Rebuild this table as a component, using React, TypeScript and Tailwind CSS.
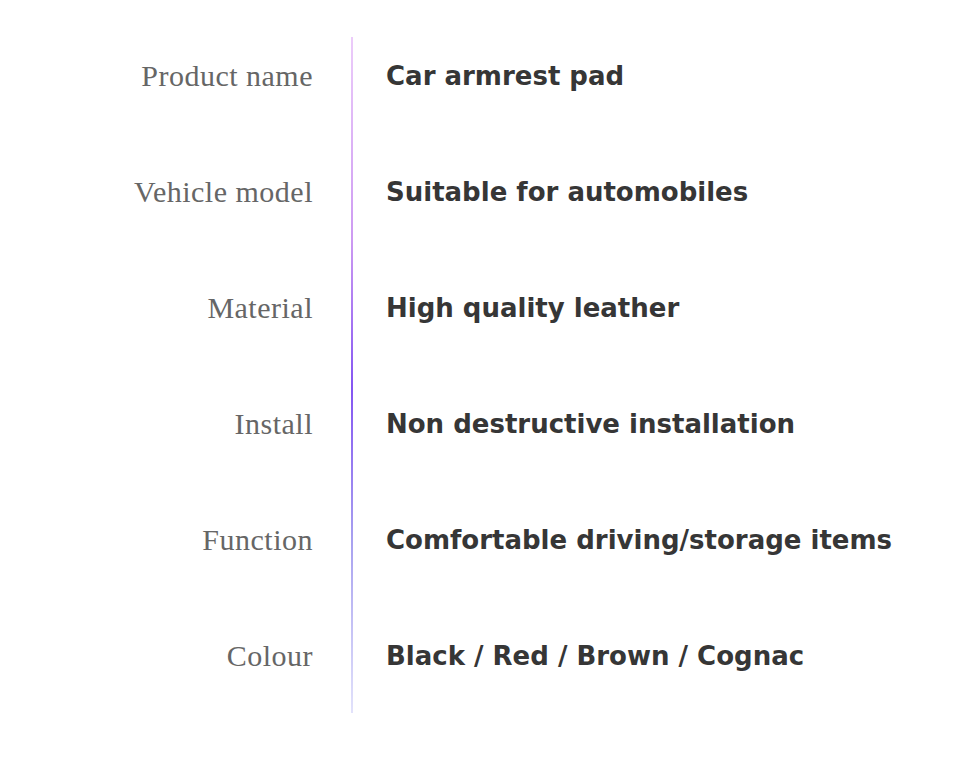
const rows = [
  { label: "Product name", value: "Car armrest pad" },
  { label: "Vehicle model", value: "Suitable for automobiles" },
  { label: "Material", value: "High quality leather" },
  { label: "Install", value: "Non destructive installation" },
  { label: "Function", value: "Comfortable driving/storage items" },
  { label: "Colour", value: "Black / Red / Brown / Cognac" },
];

export default function App() {
  return (
    <div className="w-[960px] h-[757px] bg-white flex pt-[18px]">
      {/* labels */}
      <div className="w-[313px] flex flex-col">
        {rows.map((r) => (
          <div
            key={r.label}
            className="h-[116px] flex items-center justify-end pb-[2px] text-[30px] tracking-[0.5px] text-[#666666] font-['Liberation_Serif',serif]"
          >
            {r.label}
          </div>
        ))}
      </div>

      {/* divider */}
      <div className="ml-[38px] w-[2px] mt-[19px] h-[676px] bg-[linear-gradient(to_bottom,#ecccfa_0%,#cd9af2_30%,#8455f2_52%,#a9a2f0_75%,#e2e2fb_100%)]" />

      {/* values */}
      <div className="ml-[33px] flex flex-col">
        {rows.map((r) => (
          <div
            key={r.value}
            className="h-[116px] flex items-center text-[26px] font-bold text-[#363636] font-['DejaVu_Sans',sans-serif]"
          >
            {r.value}
          </div>
        ))}
      </div>
    </div>
  );
}
